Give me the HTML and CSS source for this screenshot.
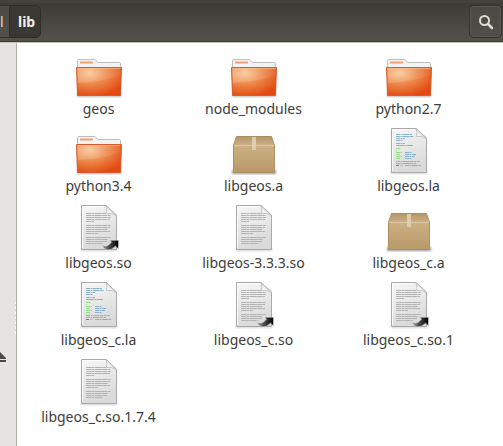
FILE: index.html
```html
<!DOCTYPE html>
<html lang="en">
<head>
<meta charset="utf-8">
<title>lib</title>
<link rel="stylesheet" href="styles.css">
</head>
<body>
<svg class="defs" aria-hidden="true">
  <defs>
    <radialGradient id="orange" cx="0.3" cy="0.2" r="0.85">
      <stop offset="0" stop-color="#f9c592"/><stop offset="0.45" stop-color="#ee8a4c"/><stop offset="1" stop-color="#e24a12"/>
    </radialGradient>
    <linearGradient id="shine" x1="0" y1="0" x2="1" y2="0">
      <stop offset="0" stop-color="#fff" stop-opacity="0.18"/><stop offset="1" stop-color="#fff" stop-opacity="0.06"/>
    </linearGradient>
    <linearGradient id="paper" x1="0" y1="0" x2="0.3" y2="1">
      <stop offset="0" stop-color="#f7f7f7"/><stop offset="1" stop-color="#dadada"/>
    </linearGradient>
    <linearGradient id="fold" x1="0" y1="1" x2="0.7" y2="0.3">
      <stop offset="0" stop-color="#fff"/><stop offset="0.5" stop-color="#f4f4f4"/><stop offset="1" stop-color="#c4c4c4"/>
    </linearGradient>
    <linearGradient id="card" x1="0" y1="0" x2="0" y2="1">
      <stop offset="0" stop-color="#cdb083"/><stop offset="1" stop-color="#b89a69"/>
    </linearGradient>
    <linearGradient id="lid" x1="0" y1="0" x2="0" y2="1">
      <stop offset="0" stop-color="#b4966a"/><stop offset="1" stop-color="#cbb088"/>
    </linearGradient>
    <linearGradient id="swoosh" x1="0" y1="0" x2="1" y2="0">
      <stop offset="0" stop-color="#aaa"/><stop offset="0.5" stop-color="#444"/><stop offset="1" stop-color="#000"/>
    </linearGradient>
    <filter id="soft" x="-10%" y="-100%" width="120%" height="300%"><feGaussianBlur stdDeviation="0.8"/></filter>

    <symbol id="folder" viewBox="0 0 48 48">
      <rect x="2" y="44" width="44" height="3" fill="#777" opacity="0.5" filter="url(#soft)"/>
      <path d="M2.500 45V10.500q0-1 1-1H19.500q1 0 1.500 1l1.500 2H44.500q1 0 1 1V45z" fill="#f3f3f3" stroke="#bdbdbd"/>
      <path d="M5 11.500H18v2H5z" fill="#efa070"/>
      <path d="M1.500 17.500H46.500L45.500 45.500H2.500z" fill="url(#orange)" stroke="#d65a2b"/>
      <path d="M2.500 18.500H45.500L45.400 24Q38 30.500 2.900 33z" fill="url(#shine)"/>
      <path d="M2.500 18.500H45.500" stroke="#fbc59a" stroke-opacity="0.6"/>
    </symbol>

    <symbol id="package" viewBox="0 0 48 48">
      <rect x="2" y="43" width="44" height="4" fill="#555" opacity="0.6" filter="url(#soft)"/>
      <path d="M6.500 9.500H41.500L44.500 18.500H3.500z" fill="url(#lid)" stroke="#ab8d61"/>
      <path d="M3.500 18.500H44.500V45.500H3.500z" fill="url(#card)" stroke="#ae8f60"/>
      <path d="M4 18.500H44" stroke="#dcc7a3"/>
      <path d="M22 10H26V23H22z" fill="#e2d2b7" opacity="0.85"/>
    </symbol>

    <symbol id="sheet" viewBox="0 0 48 48">
      <rect x="6" y="44" width="36" height="3" fill="#888" opacity="0.35" filter="url(#soft)"/>
      <path d="M6.500 1.500H31L41.500 11V45.500H6.500z" fill="url(#paper)" stroke="#a8a8a8"/>
      <path d="M7.500 44V2.500H30" fill="none" stroke="#fff" stroke-opacity="0.8"/>
      <path d="M31 1.500Q32.500 5 31.500 9.500Q37 8.500 41.500 11.500z" fill="url(#fold)" stroke="#b4b4b4" stroke-width="0.7"/>
    </symbol>

    <symbol id="text" viewBox="0 0 48 48">
      <use href="#sheet"/>
      <path d="M11 9.500H31M11 11.500H36M11 13.500H36M11 15.500H35M11 17.500H19M11 21.500H36M11 23.500H35M11 25.500H33M11 27.500H35M11 29.500H23M11 33.500H36M11 35.500H33M11 37.500H32M11 39.500H28" fill="none" stroke="#b2b2b2" stroke-dasharray="5 .4 3 .4 7 .4"/>
    </symbol>

    <symbol id="link" viewBox="0 0 48 48">
      <use href="#text"/>
      <path d="M26.500 40Q28 42.500 31 42Q34 41.500 36.500 38L34.500 36.200H43.500V45L40.500 42.200Q36 46.500 32 46Q27.500 45 26.500 40z" fill="url(#swoosh)" stroke="#eee" stroke-width="0.5"/>
    </symbol>

    <symbol id="code" viewBox="0 0 48 48">
      <use href="#sheet"/>
      <g fill="none" stroke-dasharray="4 .5 2 .5 6 .5">
        <path d="M11 7.500H27M11 9.500H29M11 11.500H20M11 13.500H18M15 18.500H28M20 25.500H27M20 27.500H31M20 29.500H30M20 31.500H27M11 36.500H31M20 38.500H36" stroke="#8ab0c8"/>
        <path d="M11 16.500H20M11 18.500H15M11 34.500H35M24 36.500H27" stroke="#c59bc2"/>
        <path d="M11 21.500H16M11 23.500H12M11 25.500H17M11 27.500H15M11 29.500H17M11 31.500H15M15 38.500H18" stroke="#93d88d"/>
        <path d="M11 38.500H14" stroke="#dc5050"/>
      </g>
    </symbol>
  </defs>
</svg>

<header class="toolbar">
  <nav class="pathbar" aria-label="Path">
    <button class="crumb parent" type="button">l</button>
    <button class="crumb current" type="button">lib</button>
  </nav>
  <button class="search" type="button" aria-label="Search">
    <svg viewBox="0 0 16 16" width="16" height="16"><circle cx="6.500" cy="6.500" r="4.500" fill="none" stroke="#dfdbd2" stroke-width="2"/><path d="M10 10L14 14" stroke="#dfdbd2" stroke-width="2.500" stroke-linecap="round"/></svg>
  </button>
</header>
<div class="window">
  <aside class="sidebar">
    <button class="eject" type="button" aria-label="Eject">
      <svg viewBox="0 0 14 12" width="14" height="12"><path d="M6 0H7L14 7V8H0V7zM0 9H14V11H0z" fill="#4a4a47"/></svg>
    </button>
    <span class="grip"></span>
  </aside>
  <main class="files">
    <a class="item" href="#geos"><svg class="icon"><use href="#folder"/></svg><span>geos</span></a>
    <a class="item" href="#node_modules"><svg class="icon"><use href="#folder"/></svg><span>node_modules</span></a>
    <a class="item" href="#python2.7"><svg class="icon"><use href="#folder"/></svg><span>python2.7</span></a>
    <a class="item" href="#python3.4"><svg class="icon"><use href="#folder"/></svg><span>python3.4</span></a>
    <a class="item" href="#libgeos.a"><svg class="icon"><use href="#package"/></svg><span>libgeos.a</span></a>
    <a class="item" href="#libgeos.la"><svg class="icon"><use href="#code"/></svg><span>libgeos.la</span></a>
    <a class="item" href="#libgeos.so"><svg class="icon"><use href="#link"/></svg><span>libgeos.so</span></a>
    <a class="item" href="#libgeos-3.3.3.so"><svg class="icon"><use href="#text"/></svg><span>libgeos-3.3.3.so</span></a>
    <a class="item" href="#libgeos_c.a"><svg class="icon"><use href="#package"/></svg><span>libgeos_c.a</span></a>
    <a class="item" href="#libgeos_c.la"><svg class="icon"><use href="#code"/></svg><span>libgeos_c.la</span></a>
    <a class="item" href="#libgeos_c.so"><svg class="icon"><use href="#link"/></svg><span>libgeos_c.so</span></a>
    <a class="item" href="#libgeos_c.so.1"><svg class="icon"><use href="#link"/></svg><span>libgeos_c.so.1</span></a>
    <a class="item" href="#libgeos_c.so.1.7.4"><svg class="icon"><use href="#text"/></svg><span>libgeos_c.so.1.7.4</span></a>
  </main>
</div>
</body>
</html>
```
FILE: styles.css
```css
* { box-sizing: border-box; }

body {
  margin: 0;
  min-height: 100vh;
  display: flex;
  flex-direction: column;
  background: #fff;
  color: #3c3c3c;
  font: 14px/22px "Noto Sans", "Open Sans", sans-serif;
}

button {
  margin: 0;
  padding: 0;
  border: 0;
  background: none;
  color: inherit;
  font: inherit;
}

.defs {
  position: absolute;
  width: 0;
  height: 0;
}

.toolbar {
  display: flex;
  justify-content: space-between;
  align-items: flex-start;
  padding: 2px 1px 4px 0;
  border-top: 3px solid #43423d;
  border-bottom: 1px solid #c9c6c1;
  background: linear-gradient(#3c3b37, #54524b);
  box-shadow: inset 0 -1px #3d3c38;
}

.pathbar {
  display: flex;
  height: 33px;
}

.crumb {
  color: #dfdbd2;
}

.parent {
  width: 9px;
  text-align: left;
  border: solid #33322e;
  border-width: 1px 0;
  background: linear-gradient(#4b4a44, #52504a);
}

.current {
  padding: 0 5px 0 8px;
  border: 1px solid #2e2d2a;
  border-radius: 0 5px 5px 0;
  background: #393833;
  color: #f3efe8;
  font-weight: bold;
}

.search {
  display: grid;
  place-items: center;
  width: 33px;
  height: 33px;
  border: 1px solid #33322e;
  border-radius: 5px;
  background: linear-gradient(#4a4943, #504e47);
  box-shadow: inset 0 0 0 1px #5a5851;
}

.window {
  flex: 1;
  display: flex;
}

.sidebar {
  display: flex;
  align-items: center;
  justify-content: space-between;
  width: 17px;
  padding-top: 146px;
  background: #e6e4e2;
  border-right: 1px solid #b5b0a9;
}

.eject {
  display: flex;
  margin: 78px 0 0 -8px;
}

.grip {
  width: 1px;
  height: 32px;
  background: repeating-linear-gradient(#fff 0 2px, #cfccc8 2px 3px, #e6e4e2 3px 5px);
}

.files {
  flex: 1;
  display: grid;
  grid-template-columns: repeat(auto-fill, 155px);
  align-content: start;
  row-gap: 7px;
  padding: 7px 4px;
}

.item {
  display: flex;
  flex-direction: column;
  align-items: center;
  color: inherit;
  text-decoration: none;
}

.icon {
  width: 48px;
  height: 48px;
}
```
